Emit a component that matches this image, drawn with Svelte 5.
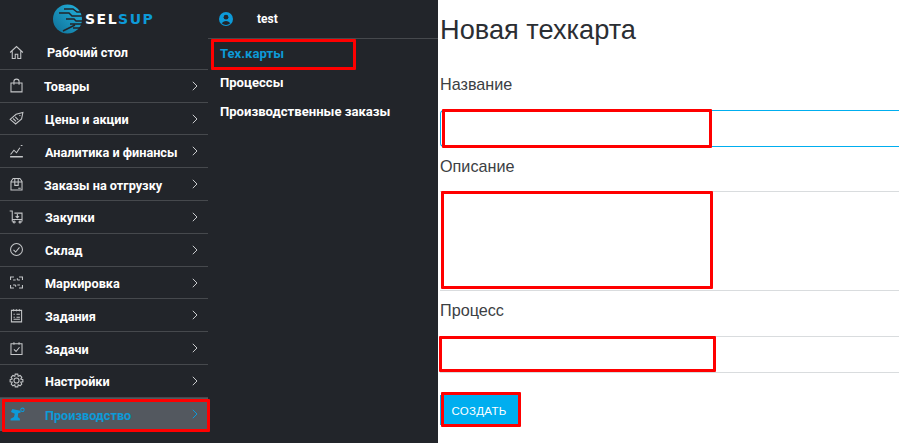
<script>
  const menu = [
    { label: 'Рабочий стол', icon: 'home', x: 47, leaf: true },
    { label: 'Товары', icon: 'bag', x: 44 },
    { label: 'Цены и акции', icon: 'tag', x: 45 },
    { label: 'Аналитика и финансы', icon: 'chart', x: 45 },
    { label: 'Заказы на отгрузку', icon: 'box', x: 44 },
    { label: 'Закупки', icon: 'cart', x: 45 },
    { label: 'Склад', icon: 'check', x: 45 },
    { label: 'Маркировка', icon: 'scan', x: 45 },
    { label: 'Задания', icon: 'list', x: 45 },
    { label: 'Задачи', icon: 'todo', x: 45 },
    { label: 'Настройки', icon: 'gear', x: 45 },
    { label: 'Производство', icon: 'robot', x: 45, active: true }
  ];

  const icons = {
    home: 'M2.5 10 L10 3 L17.5 10 M5 8.5 V17 H8.5 V12 H11.5 V17 H15 V8.5',
    bag: 'M3.5 7 H16.5 V17.5 H3.5 Z M7 9 V5 Q7 2.5 10 2.5 Q13 2.5 13 5 V9',
    tag: 'M2.5 11 L9.5 5 L17.5 3 L16 10.5 L9 16.5 Z M13.5 6 L14.5 7 M6 10 L9.5 13.5 M8.5 8 L12 11.5',
    chart: 'M2.5 16.5 H17.5 M2.5 16 H17.5 M3 13.5 L7 8.5 L10 11.5 L14 5.5 M15 3 L17 3',
    box: 'M3.5 6.5 L6 3 H14 L16.5 6.5 V16.5 H3.5 Z M3.5 7 H16.5 M8 3 V11 H12 V3 M12 14.5 H15',
    cart: 'M2 3.5 H5 V13.5 H16.5 V6 H7.5 M11 7 V11 M9 9.5 L11 11.5 L13 9.5 M5 13.5 V16 M16.5 13.5 V16 M6 16.5 A1.2 1.2 0 1 0 8.4 16.5 A1.2 1.2 0 1 0 6 16.5 M13 16.5 A1.2 1.2 0 1 0 15.4 16.5 A1.2 1.2 0 1 0 13 16.5',
    check: 'M10 3 A7 7 0 1 0 10 17 A7 7 0 1 0 10 3 Z M6.5 10.5 L9 13 L13.5 7.5',
    scan: 'M3 7 V3.5 H7 M13 3.5 H17 V7 M3 13 V16.5 H7 M13 16.5 H17 V13 M6 7 H9 M11 7 H14 M6 13 H9 M11 13 H14 M9 13 V15 M11 5 V7',
    list: 'M4 4 H16 V17.5 H4 Z M6.5 2.5 V5 M10 2.5 V5 M13.5 2.5 V5 M6.5 8.5 H8 M10 8.5 H14 M6.5 12 H8 M10 12 H14 M6.5 14.5 H14',
    todo: 'M3.5 4.5 H16.5 V17 H3.5 Z M7 2.5 V5.5 M13 2.5 V5.5 M7 11 L9.5 13.5 L13.5 8.5',
    gear: 'M10 7 A3 3 0 1 0 10 13 A3 3 0 1 0 10 7 Z M8.5 2.5 H11.5 L12 5 L14.3 4 L16.3 6.2 L15 8.2 L17.5 9 V11.5 L15 12 L16.2 14.2 L14.2 16.2 L12 15 L11.5 17.5 H8.5 L8 15 L5.8 16.2 L3.8 14.2 L5 12 L2.5 11.5 V9 L5 8.2 L3.7 6.2 L5.7 4 L8 5 Z'
  };

  const submenu = [
    { label: 'Тех.карты', active: true },
    { label: 'Процессы' },
    { label: 'Производственные заказы' }
  ];
</script>

<div class="page">
  <nav class="sidebar">
    <div class="logo">
      <svg width="30" height="30" viewBox="0 0 30 30">
        <defs>
          <linearGradient id="globe" x1="0" y1="1" x2="1" y2="0">
            <stop offset="0" stop-color="#0f6f96" />
            <stop offset="1" stop-color="#23b4e0" />
          </linearGradient>
        </defs>
        <circle cx="14.5" cy="15" r="14.5" fill="url(#globe)" />
        <path d="M11 5 H20 L24 8 H30 M6 9 H16 L19 12 H30 M13 15 H21 L23 17 H30 M17 20 H30 M20 24 H30 M10 27 L22 21" stroke="#22252a" stroke-width="1.5" fill="none" />
      </svg>
      <span class="brand">SEL<span class="brand-blue">SUP</span></span>
    </div>
    {#each menu as item}
      <div class="row" class:active={item.active} class:leaf={item.leaf}>
        <span class="icon">
          {#if item.icon === 'robot'}
            <svg width="17" height="17" viewBox="0 0 20 20">
              <path d="M3 17 H14 V15 L11.5 13 L12 8.5 L15 7.5 L14.5 5.5 L5 3.5 L3.5 7 L8 9 L7 13 L3 15 Z" fill="#0d9ad8" />
              <circle cx="17" cy="4.5" r="2" fill="none" stroke="#0d9ad8" stroke-width="1.2" />
            </svg>
          {:else}
            <svg width="17" height="17" viewBox="0 0 20 20">
              <path d={icons[item.icon]} fill="none" stroke="#c4c6c8" stroke-width="1.25" />
            </svg>
          {/if}
        </span>
        <span class="label" style="left: {item.x}px">{item.label}</span>
        {#if !item.leaf}
          <svg class="chevron" width="6" height="10" viewBox="0 0 6 10">
            <path d="M0.8 0.8 L5 5 L0.8 9.2" fill="none" stroke="currentColor" stroke-width="1" />
          </svg>
        {/if}
      </div>
    {/each}
  </nav>

  <aside class="subnav">
    <div class="user">
      <svg width="14" height="14" viewBox="0 0 14 14">
        <circle cx="7" cy="7" r="7" fill="#0d9ad8" />
        <circle cx="7" cy="5.2" r="2.4" fill="#22252a" />
        <path d="M2.6 11.2 Q7 6.8 11.4 11.2 Q7 14.6 2.6 11.2 Z" fill="#22252a" />
      </svg>
      <span>test</span>
    </div>
    {#each submenu as item}
      <div class="subitem" class:active={item.active}>{item.label}</div>
    {/each}
  </aside>

  <main class="content">
    <h1>Новая техкарта</h1>
    <label class="field-label first" for="name">Название</label>
    <input id="name" class="field focused" type="text" />
    <label class="field-label" for="desc">Описание</label>
    <textarea id="desc" class="field area"></textarea>
    <label class="field-label" for="proc">Процесс</label>
    <input id="proc" class="field" type="text" />
    <button class="create">СОЗДАТЬ</button>
  </main>

  <!-- annotation frames drawn over the screenshot -->
  <div class="mark" style="left: 2px; top: 399px; width: 208px; height: 33px"></div>
  <div class="mark" style="left: 211px; top: 39px; width: 145px; height: 31px"></div>
  <div class="mark" style="left: 442px; top: 109px; width: 270px; height: 39px"></div>
  <div class="mark" style="left: 441px; top: 191px; width: 272px; height: 98px"></div>
  <div class="mark" style="left: 439px; top: 336px; width: 277px; height: 36px"></div>
  <div class="mark" style="left: 441px; top: 392px; width: 80px; height: 35px"></div>
</div>

<style>
  :global(body) {
    margin: 0;
    background: #fff;
  }

  .page {
    position: relative;
    display: flex;
    width: 899px;
    height: 443px;
    overflow: hidden;
    font-family: "Liberation Sans", Arial, sans-serif;
  }

  .sidebar {
    width: 208px;
    flex: none;
    background: #22252a;
  }

  .logo {
    display: flex;
    align-items: center;
    gap: 2px;
    height: 37px;
    padding-left: 53px;
    box-sizing: border-box;
  }

  .brand {
    font-family: "DejaVu Sans", sans-serif;
    font-size: 14px;
    font-weight: 700;
    letter-spacing: 1.5px;
    color: #fff;
  }

  .brand-blue {
    color: #0d9ad8;
  }

  .row {
    position: relative;
    display: flex;
    align-items: center;
    height: 32.8px;
    box-sizing: border-box;
    border-bottom: 1px solid #46494d;
    padding-left: 8px;
    color: #c9cbcd;
  }

  .row.active {
    background: #53585f;
    border-bottom: 0;
    color: #0d9ad8;
  }

  .label {
    position: absolute;
    margin-top: 2px;
    font-family: Roboto, sans-serif;
    font-size: 12.7px;
    font-weight: 700;
    color: #fff;
    white-space: nowrap;
  }

  .leaf .label {
    margin-top: 0;
  }

  .active .label {
    color: #0d9ad8;
  }

  .icon {
    display: flex;
  }

  .chevron {
    position: absolute;
    left: 192px;
    top: 11px;
  }

  .subnav {
    width: 230px;
    flex: none;
    background: #22252a;
  }

  .user {
    display: flex;
    align-items: center;
    gap: 24px;
    height: 39px;
    box-sizing: border-box;
    padding: 0 0 0 11px;
    border-bottom: 1px solid #46494d;
    font-family: Roboto, sans-serif;
    font-size: 12px;
    font-weight: 700;
    color: #fff;
  }

  .subitem {
    display: flex;
    align-items: center;
    height: 29px;
    padding-left: 12px;
    font-family: Roboto, sans-serif;
    font-size: 13.1px;
    font-weight: 700;
    color: #fff;
  }

  .subitem.active {
    color: #0d9ad8;
  }

  .content {
    flex: 1;
    min-width: 0;
    padding-left: 2px;
    display: flex;
    flex-direction: column;
    align-items: flex-start;
    color: #3c4043;
  }

  h1 {
    margin: 13px 0 0;
    font-size: 27.2px;
    line-height: 34px;
    font-weight: 400;
    color: #2b2e33;
  }

  .field-label {
    margin-top: 9px;
    font-size: 16.2px;
    line-height: 20px;
  }

  .field-label.first {
    margin-top: 27px;
  }

  .field {
    display: block;
    width: 100%;
    height: 37px;
    margin: 16px 0 0;
    padding: 0;
    box-sizing: border-box;
    border: 0;
    border-top: 1px solid #d9dcde;
    border-bottom: 1px solid #d9dcde;
    background: #fff;
    outline: none;
    resize: none;
  }

  .field.focused {
    border: 1px solid #00aeef;
    border-right: 0;
    border-radius: 4px 0 0 4px;
  }

  .field.area {
    height: 100px;
    margin-top: 15px;
  }

  .create {
    margin-top: 22px;
    width: 78px;
    height: 30px;
    border: 0;
    padding: 1px 0 0;
    background: #00aeef;
    color: #fff;
    font-family: "Liberation Sans", Arial, sans-serif;
    font-size: 11.5px;
    letter-spacing: 0.3px;
  }

  .mark {
    position: absolute;
    box-sizing: border-box;
    border: 3px solid #f00;
    border-radius: 1px;
    pointer-events: none;
  }
</style>
